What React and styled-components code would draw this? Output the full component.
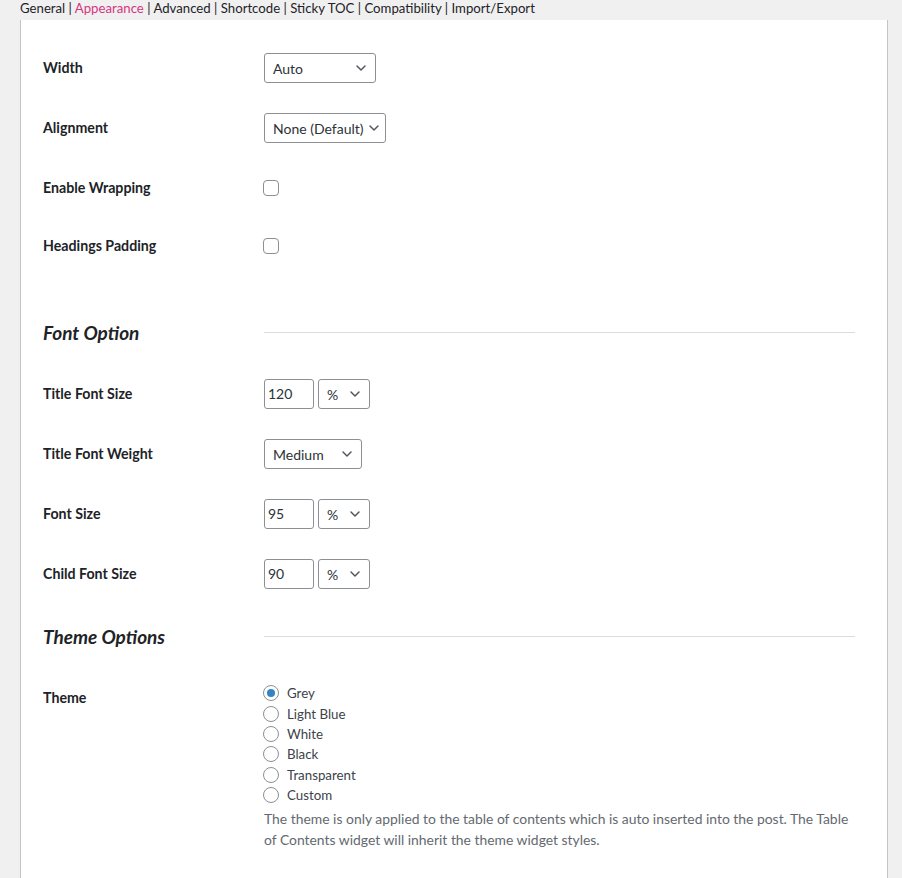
import React from 'react';
import styled, { createGlobalStyle } from 'styled-components';

const GlobalStyle = createGlobalStyle`
  body {
    margin: 0;
    background: #f0f0f1;
    font-family: Lato, "Noto Sans", "Liberation Sans", sans-serif;
    color: #1d2327;
  }
`;

const Page = styled.div`
  width: 902px;
  height: 878px;
  overflow: hidden;
`;

const TabNav = styled.div`
  padding-left: 20px;
  height: 20px;
  font-size: 13.2px;
  line-height: 16px;
  color: #1d2327;
  white-space: nowrap;
`;

const Tab = styled.span`
  color: ${props => props.active ? '#d63680' : '#1d2327'};
`;

const Panel = styled.div`
  margin-left: 20px;
  width: 868px;
  min-height: 900px;
  background: #fff;
  border-left: 1px solid #c3c4c7;
  border-right: 1px solid #c3c4c7;
  padding: 18px 32px 0 22px;
  box-sizing: border-box;
`;

const Row = styled.div`
  display: flex;
  align-items: ${props => props.top ? 'flex-start' : 'center'};
  height: ${props => props.h || 60}px;
`;

const Label = styled.div`
  width: 221px;
  flex-shrink: 0;
  font-size: 14.2px;
  font-weight: 700;
  color: #1d2327;
  padding-top: ${props => props.pt || 0}px;
  line-height: 20px;
`;

const Field = styled.div`
  flex: 1;
  display: flex;
  align-items: center;
  gap: 4px;
`;

const SelectBox = styled.div`
  display: flex;
  align-items: center;
  justify-content: space-between;
  box-sizing: border-box;
  width: ${props => props.w}px;
  height: 30px;
  padding: 0 8px 0 8px;
  border: 1px solid #8c8f94;
  border-radius: 3px;
  font-size: 14px;
  color: #2c3338;
  background: #fff;
  white-space: nowrap;
  svg {
    width: 12px;
    height: 12px;
    margin-left: 4px;
    flex-shrink: 0;
  }
`;

const NumberInput = styled.div`
  box-sizing: border-box;
  width: 50px;
  height: 30px;
  padding: 0 3px;
  border: 1px solid #8c8f94;
  border-radius: 3px;
  font-size: 14px;
  line-height: 28px;
  color: #2c3338;
`;

const Checkbox = styled.span`
  display: block;
  box-sizing: border-box;
  width: 16px;
  height: 16px;
  margin-left: -1px;
  border: 1px solid #8c8f94;
  border-radius: 4px;
  background: #fff;
`;

const SectionHead = styled.div`
  display: flex;
  align-items: center;
  height: ${props => props.h}px;
  padding-top: ${props => props.pt}px;
  box-sizing: border-box;
`;

const SectionTitle = styled.h3`
  margin: 0;
  width: 221px;
  flex-shrink: 0;
  font-size: 19px;
  font-style: italic;
  font-weight: 700;
  line-height: 24px;
  color: #1d2327;
`;

const Rule = styled.div`
  flex: 1;
  height: 1px;
  margin-top: -2px;
  background: #dcdcde;
`;

const RadioList = styled.div`
  padding-top: 13px;
  flex: 1;
`;

const RadioItem = styled.div`
  display: flex;
  align-items: center;
  gap: 8px;
  height: 20.4px;
  font-size: 13.3px;
  color: #3c434a;
`;

const RadioCircle = styled.span`
  position: relative;
  box-sizing: border-box;
  width: 16px;
  height: 16px;
  margin-left: -1px;
  border-radius: 50%;
  border: 1px solid #8c8f94;
  background: #fff;
  flex-shrink: 0;
  ${props => props.checked && `
    &::after {
      content: '';
      position: absolute;
      left: 3px;
      top: 3px;
      width: 8px;
      height: 8px;
      border-radius: 50%;
      background: #3582c4;
    }
  `}
`;

const Description = styled.p`
  margin: 3px 0 0;
  font-size: 13.9px;
  line-height: 21px;
  color: #646970;
`;

const Chevron = () => (
  <svg viewBox="0 0 12 12">
    <path d="M2 4l4 4 4-4" fill="none" stroke="#50575e" strokeWidth="1.5" strokeLinecap="round" strokeLinejoin="round" />
  </svg>
);

const Select = ({ w, value }) => (
  <SelectBox w={w}>
    <span>{value}</span>
    <Chevron />
  </SelectBox>
);

const tabs = ['General', 'Appearance', 'Advanced', 'Shortcode', 'Sticky TOC', 'Compatibility', 'Import/Export'];
const themes = ['Grey', 'Light Blue', 'White', 'Black', 'Transparent', 'Custom'];

const SizeField = ({ value }) => (
  <Field>
    <NumberInput>{value}</NumberInput>
    <Select w={52} value="%" />
  </Field>
);

export default function App() {
  return (
    <Page>
      <GlobalStyle />
      <TabNav>
        {tabs.map((t, i) => (
          <React.Fragment key={t}>
            {i > 0 && ' | '}
            <Tab active={t === 'Appearance'}>{t}</Tab>
          </React.Fragment>
        ))}
      </TabNav>
      <Panel>
        <Row>
          <Label>Width</Label>
          <Field><Select w={112} value="Auto" /></Field>
        </Row>
        <Row>
          <Label>Alignment</Label>
          <Field><Select w={122} value="None (Default)" /></Field>
        </Row>
        <Row>
          <Label>Enable Wrapping</Label>
          <Field><Checkbox /></Field>
        </Row>
        <Row h={56}>
          <Label>Headings Padding</Label>
          <Field><Checkbox /></Field>
        </Row>

        <SectionHead h={90} pt={28}>
          <SectionTitle>Font Option</SectionTitle>
          <Rule />
        </SectionHead>

        <Row>
          <Label>Title Font Size</Label>
          <SizeField value="120" />
        </Row>
        <Row>
          <Label>Title Font Weight</Label>
          <Field><Select w={98} value="Medium" /></Field>
        </Row>
        <Row>
          <Label>Font Size</Label>
          <SizeField value="95" />
        </Row>
        <Row>
          <Label>Child Font Size</Label>
          <SizeField value="90" />
        </Row>

        <SectionHead h={66} pt={0}>
          <SectionTitle>Theme Options</SectionTitle>
          <Rule />
        </SectionHead>

        <Row top h={200}>
          <Label pt={18}>Theme</Label>
          <RadioList>
            {themes.map(t => (
              <RadioItem key={t}>
                <RadioCircle checked={t === 'Grey'} />
                {t}
              </RadioItem>
            ))}
            <Description>
              The theme is only applied to the table of contents which is auto inserted into the post. The Table of Contents widget will inherit the theme widget styles.
            </Description>
          </RadioList>
        </Row>
      </Panel>
    </Page>
  );
}
